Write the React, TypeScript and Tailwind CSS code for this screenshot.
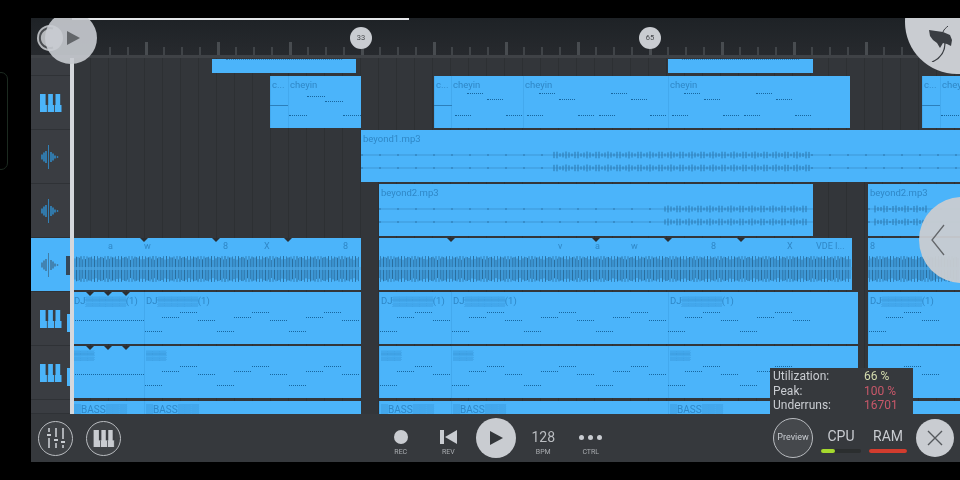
import React from "react";

const BLUE = "#4bb4fa";

type Note = [number, number, number];
type Section = { at: number; label?: string };
type ClipData = {
  x: number;
  w: number;
  label?: string;
  kind?: "midi" | "thin" | "wave" | "dj" | "bass" | "top";
  sections?: Section[];
  notes?: Note[];
  pins?: number[];
  words?: [number, string][];
  loud?: [number, number];
};

const Piano = ({ color, className }: { color: string; className?: string }) => (
  <svg viewBox="0 0 22 18" className={className}>
    <rect width="22" height="18" fill={color} />
    {[0, 1, 2].map((i) => (
      <rect key={i} x={7.3 * (i + 1) - 0.4} y="11" width="0.8" height="7" fill="#3a3d42" />
    ))}
    {[0, 1, 2].map((i) => (
      <rect key={i} x={5.6 + 7.3 * i} y="0" width="2.6" height="11" fill="#3a3d42" />
    ))}
  </svg>
);

const WaveIcon = ({ color }: { color: string }) => (
  <svg viewBox="0 0 20 24" className="h-[24px] w-[20px]">
    {[
      [2, 5],
      [4, 9],
      [6, 12],
      [8.5, 24],
      [11, 10],
      [13, 7],
      [15, 3],
      [17.5, 1.5],
    ].map(([x, h], i) => (
      <line key={i} x1={x} x2={x} y1={12 - h / 2} y2={12 + h / 2} stroke={color} strokeWidth={i === 3 ? 0.8 : 1.4} />
    ))}
  </svg>
);

// dashes of a midi pattern
const Notes = ({ notes }: { notes: Note[] }) => (
  <>
    {notes.map(([x, y, w], i) => (
      <div
        key={i}
        className="absolute h-[2px] border-b border-dotted border-[#17669f]"
        style={{ left: x, top: y, width: w }}
      />
    ))}
  </>
);

const ThinWave = ({ width, loud }: { width: number; loud: [number, number] }) => {
  const ticks = Array.from({ length: Math.floor(width / 3) }, (_, i) => i * 3 + 1);
  return (
    <svg width={width} height="34" className="absolute left-0 top-[15px]">
      {[10, 23].map((y) => (
        <g key={y}>
          <line x1="0" x2={width} y1={y} y2={y} stroke="#3f97d6" strokeWidth="1" />
          {ticks.map((t, i) => {
            const inside = t > loud[0] && t < loud[1];
            if (!inside && i % 6 !== 0) return null;
            const h = inside ? 1 + Math.abs(Math.sin(i * 0.9)) * 2.5 : 1;
            return <line key={t} x1={t} x2={t} y1={y - h} y2={y + h} stroke="#2a76ad" strokeWidth="1" />;
          })}
        </g>
      ))}
    </svg>
  );
};

const DenseWave = ({ width }: { width: number }) => {
  const bars = Array.from({ length: Math.floor(width / 1.5) }, (_, i) => i * 1.5);
  return (
    <svg width={width} height="28" className="absolute left-0 top-[17px]">
      {bars.map((x, i) => {
        const h = 9 + 4 * Math.abs(Math.sin(i * 1.37));
        return (
          <line
            key={i}
            x1={x}
            x2={x}
            y1={14 - h}
            y2={14 + h}
            stroke={i % 3 === 0 ? "#2a6f9f" : "#337fb6"}
            strokeWidth="1"
          />
        );
      })}
      <rect x="0" y="12" width={width} height="3" fill="#4aa3e0" opacity="0.75" />
    </svg>
  );
};

const chorus: Note[] = [
  [16, 16, 16],
  [36, 22, 16],
  [4, 38, 16],
  [55, 38, 16],
];

const djNotes = (count: number, offset: number): Note[] => {
  const out: Note[] = [];
  for (let i = 0; i < count; i++) {
    const x = offset + i * 72;
    out.push([x, 38, 17], [x + 17, 24, 17], [x + 35, 19, 17], [x + 53, 27, 17]);
  }
  return out;
};

const rows: { h: number; icon?: "piano" | "wave"; active?: boolean; chip?: boolean; clips: ClipData[] }[] = [
  {
    h: 18,
    clips: [
      { x: 140, w: 144, kind: "top" },
      { x: 596, w: 145, kind: "top" },
    ],
  },
  {
    h: 54,
    icon: "piano",
    clips: [
      { x: 198, w: 91, kind: "midi", sections: [{ at: 0, label: "c..." }, { at: 18, label: "cheyin" }], notes: [[37, 19, 18], [55, 24, 18], [19, 38, 18], [73, 38, 18]] },
      {
        x: 362,
        w: 416,
        kind: "midi",
        sections: [
          { at: 0, label: "c..." },
          { at: 17, label: "cheyin" },
          { at: 89, label: "cheyin" },
          { at: 234, label: "cheyin" },
        ],
        notes: [
          ...chorus.map(([x, y, w]): Note => [x + 17, y, w]),
          ...chorus.map(([x, y, w]): Note => [x + 89, y, w]),
          ...chorus.map(([x, y, w]): Note => [x + 161, y, w]),
          ...chorus.map(([x, y, w]): Note => [x + 234, y, w]),
          ...chorus.map(([x, y, w]): Note => [x + 306, y, w]),
        ],
      },
      { x: 850, w: 40, kind: "midi", sections: [{ at: 0, label: "c..." }, { at: 18, label: "chey" }], notes: [[19, 38, 18]] },
    ],
  },
  { h: 54, icon: "wave", clips: [{ x: 289, w: 600, label: "beyond1.mp3", kind: "thin", loud: [190, 450] }] },
  {
    h: 54,
    icon: "wave",
    clips: [
      { x: 307, w: 434, label: "beyond2.mp3", kind: "thin", loud: [285, 430] },
      { x: 796, w: 92, label: "beyond2.mp3", kind: "thin", loud: [5, 60] },
    ],
  },
  {
    h: 54,
    icon: "wave",
    active: true,
    clips: [
      { x: 0, w: 289, kind: "wave", pins: [72, 144, 216], words: [[36, "a"], [72, "w"], [151, "8"], [192, "X"], [271, "8"]] },
      { x: 307, w: 473, kind: "wave", pins: [72, 217, 289, 362], words: [[179, "v"], [216, "a"], [252, "w"], [332, "8"], [408, "X"], [437, "VDE I..."]] },
      { x: 796, w: 92, kind: "wave", words: [[2, "8"]] },
    ],
  },
  {
    h: 54,
    icon: "piano",
    chip: true,
    clips: [
      { x: 0, w: 289, kind: "dj", sections: [{ at: 0, label: "DJ▒▒▒▒▒▒(1)" }, { at: 72, label: "DJ▒▒▒▒▒▒(1)" }], pins: [18, 36, 54], notes: [[1, 27, 71], ...djNotes(3, 73)] },
      { x: 307, w: 479, kind: "dj", sections: [{ at: 0, label: "DJ▒▒▒▒▒▒(1)" }, { at: 72, label: "DJ▒▒▒▒▒▒(1)" }, { at: 289, label: "DJ▒▒▒▒▒▒(1)" }], notes: djNotes(6, 1) },
      { x: 796, w: 92, kind: "dj", sections: [{ at: 0, label: "DJ▒▒▒▒▒▒(1)" }], notes: djNotes(1, 1) },
    ],
  },
  {
    h: 54,
    icon: "piano",
    chip: true,
    clips: [
      { x: 0, w: 289, kind: "dj", sections: [{ at: 0, label: "▒▒▒" }, { at: 72, label: "▒▒▒" }], pins: [18, 36, 54], notes: [[1, 27, 71], ...djNotes(3, 73)] },
      { x: 307, w: 479, kind: "dj", sections: [{ at: 0, label: "▒▒▒" }, { at: 72, label: "▒▒▒" }, { at: 289, label: "▒▒▒" }], notes: djNotes(6, 1) },
      { x: 796, w: 92, kind: "dj", notes: djNotes(1, 1) },
    ],
  },
  {
    h: 14,
    clips: [
      { x: 0, w: 289, kind: "bass", sections: [{ at: 0, label: "▒BASS▒▒▒" }, { at: 72, label: "▒BASS▒▒▒" }] },
      { x: 307, w: 479, kind: "bass", sections: [{ at: 0, label: "▒BASS▒▒▒" }, { at: 72, label: "▒BASS▒▒▒" }, { at: 289, label: "▒BASS▒▒▒" }] },
      { x: 796, w: 92, kind: "bass" },
    ],
  },
];

const Clip = ({ clip, rowH }: { clip: ClipData; rowH: number }) => {
  const top = clip.kind === "top" ? 1 : clip.kind === "bass" ? 1 : 0;
  const height = clip.kind === "top" ? 14 : clip.kind === "bass" ? rowH - 1 : rowH - 2;
  return (
    <div className="absolute bg-[#4bb4fa]" style={{ left: clip.x, width: clip.w, top, height }}>
      <div className="absolute inset-0 overflow-hidden">
        {clip.kind === "top" && (
          <div className="absolute left-[14px] right-[14px] top-0 h-[2px] border-t border-dotted border-[#2c7fbb]" />
        )}
        {clip.label && (
          <span className="absolute left-[2px] top-[2px] text-[9.5px] leading-[14px] text-[#2f87c6]">{clip.label}</span>
        )}
        {clip.kind === "thin" && <ThinWave width={clip.w} loud={clip.loud ?? [0, 0]} />}
        {clip.kind === "wave" && <DenseWave width={clip.w} />}
        {clip.words?.map(([x, word]) => (
          <span key={x} className="absolute top-[2px] text-[9px] leading-[12px] text-[#2f87c6]" style={{ left: x }}>
            {word}
          </span>
        ))}
        {clip.sections?.map((s) => (
          <div key={s.at} className="absolute bottom-0 top-0 border-l border-[#43a9ee]" style={{ left: s.at }}>
            <span
              className={`ml-[1px] block whitespace-nowrap text-[#2f87c6] ${
                clip.kind === "bass" ? "mt-[3px] text-[10px] leading-[11px]" : "mt-[2px] text-[9.5px] leading-[14px]"
              }`}
            >
              {s.label}
            </span>
          </div>
        ))}
        {clip.notes && <Notes notes={clip.notes} />}
        {clip.kind === "midi" && <div className="absolute left-0 top-[29px] h-[1px] w-[18px] bg-[#2c7fbb]" />}
      </div>
      {clip.pins?.map((p) => (
        <div
          key={p}
          className="absolute top-0 h-0 w-0 border-x-[4px] border-t-[4px] border-x-transparent border-t-[#2b2e32]"
          style={{ left: p - 4 }}
        />
      ))}
    </div>
  );
};

const Ruler = () => (
  <div className="relative h-[37px] bg-gradient-to-b from-[#1e2226] to-[#272a2e]">
    <div className="absolute bottom-0 left-[78px] flex items-end">
      {Array.from({ length: 48 }, (_, i) => (
        <div key={i} className="flex w-[18px] justify-start">
          <div
            className={i % 4 === 2 ? "h-[13px] w-[3px] bg-[#484c50]" : "h-[8px] w-[2px] bg-[#404448]"}
          />
        </div>
      ))}
    </div>
    {[
      [319, "33"],
      [608, "65"],
    ].map(([left, n]) => (
      <div
        key={n}
        className="absolute top-[9px] flex h-[22px] w-[22px] items-center justify-center rounded-full bg-[#c9ccd1] text-[7.5px] text-[#44474b]"
        style={{ left: left as number }}
      >
        {n}
      </div>
    ))}
  </div>
);

const TrackRow = ({ row }: { row: (typeof rows)[number] }) => (
  <div className="flex" style={{ height: row.h }}>
    <div
      className={`relative flex w-[41px] shrink-0 items-center justify-start border-b border-[#2f3236] pl-[9px] ${row.active ? "bg-[#4bb4fa]" : "bg-[#3a3d42]"}`}
    >
      {row.icon === "piano" && <Piano color={BLUE} className="h-[18px] w-[22px]" />}
      {row.icon === "wave" && <WaveIcon color={row.active ? "#3f6f92" : "#2f93d6"} />}
      {row.active && <div className="absolute left-[35px] top-[18px] h-[19px] w-[4px] bg-[#34485a]" />}
      {row.chip && <div className="absolute left-[36px] top-[22px] h-[18px] w-[3px] bg-[#4bb4fa]" />}
    </div>
    <div className="relative flex-1 bg-[#33363a] bg-[repeating-linear-gradient(90deg,#2d3033_0_1px,transparent_1px_18px)]">
      {row.clips.map((c) => (
        <Clip key={c.x} clip={c} rowH={row.h} />
      ))}
    </div>
  </div>
);

const RoundIcon = ({ children }: { children: React.ReactNode }) => (
  <div className="flex h-[35px] w-[35px] items-center justify-center rounded-full border border-[#b9bcc0] bg-[#3f4246]">
    {children}
  </div>
);

const Transport = ({ label, children }: { label: string; children: React.ReactNode }) => (
  <div className="flex w-[47.5px] flex-col items-center pt-[8px]">
    <div className="flex h-[20px] items-center">{children}</div>
    <span className="text-[7px] leading-[10px] text-[#a9acb0]">{label}</span>
  </div>
);

const Meter = ({ label, color, fill, track }: { label: string; color: string; fill: string; track: string }) => (
  <div className="flex w-[40px] flex-col items-center pt-[3px]">
    <span className="text-[14px] leading-[20px] text-[#c9ccd1]">{label}</span>
    <div className={`mt-[3px] h-[4px] rounded-sm bg-[#2b2e2f] ${track}`}>
      <div className="h-full rounded-sm" style={{ width: fill, background: color }} />
    </div>
  </div>
);

export default function App() {
  return (
    <div className="relative h-[480px] w-[960px] overflow-hidden bg-black py-[18px] pl-[31px] font-['Roboto',sans-serif]">
      <div className="absolute -left-[6px] top-[72px] h-[98px] w-[14px] rounded-lg border border-[#1c2a20]" />
      <div className="relative flex h-[444px] w-[929px] flex-col overflow-hidden bg-[#33363a] blur-[0.4px]">
        <Ruler />
        <div className="h-[3px] bg-[#3f4246]" />

        <div className="flex h-[356px] flex-col overflow-hidden">
          {rows.map((row, i) => (
            <TrackRow key={i} row={row} />
          ))}
        </div>

        <div className="flex h-[48px] items-center bg-[#36393d] pl-[7px] pr-[6px]">
          <div className="flex gap-[13px]">
            <RoundIcon>
              <svg viewBox="0 0 24 24" className="h-[24px] w-[24px]">
                {[
                  [5, 9],
                  [12, 14],
                  [19, 16],
                ].map(([x, k]) => (
                  <g key={x} stroke="#c9ccd1">
                    <line x1={x} x2={x} y1="2" y2={k - 3} strokeWidth="1.6" />
                    <line x1={x} x2={x} y1={k + 3} y2="22" strokeWidth="1.6" />
                    <line x1={x - 2} x2={x + 2} y1={k} y2={k} strokeWidth="2" />
                  </g>
                ))}
              </svg>
            </RoundIcon>
            <RoundIcon>
              <Piano color="#c9ccd1" className="h-[17px] w-[22px]" />
            </RoundIcon>
          </div>

          <div className="ml-[256px] flex items-center">
            <Transport label="REC">
              <div className="h-[14px] w-[14px] rounded-full bg-[#c9ccd1]" />
            </Transport>
            <Transport label="REV">
              <svg viewBox="0 0 17 14" className="h-[14px] w-[17px]">
                <rect width="4" height="14" fill="#c9ccd1" />
                <path d="M5 7 17 0v14z" fill="#c9ccd1" />
              </svg>
            </Transport>
            <div className="flex w-[47.5px] justify-center">
              <div className="flex h-[40px] w-[40px] items-center justify-center rounded-full bg-[#c9ccd1] pl-[2px]">
                <svg viewBox="0 0 13 14" className="h-[14px] w-[13px]">
                  <path d="M0 0 13 7 0 14z" fill="#33363a" />
                </svg>
              </div>
            </div>
            <Transport label="BPM">
              <span className="text-[14px] leading-[20px] text-[#b9bcc0]">128</span>
            </Transport>
            <Transport label="CTRL">
              <div className="flex gap-[4px]">
                <div className="h-[5px] w-[5px] rounded-full bg-[#c9ccd1]" />
                <div className="h-[5px] w-[5px] rounded-full bg-[#c9ccd1]" />
                <div className="h-[5px] w-[5px] rounded-full bg-[#c9ccd1]" />
              </div>
            </Transport>
          </div>

          <div className="ml-auto flex items-center">
            <div className="flex h-[40px] w-[40px] items-center justify-center rounded-full border border-[#b9bcc0] bg-[#45484c] text-[9px] text-[#c9ccd1]">
              Preview
            </div>
            <div className="ml-[8px]">
              <Meter label="CPU" color="#a5d92e" fill="35%" track="w-[40px]" />
            </div>
            <div className="ml-[7px]">
              <Meter label="RAM" color="#d23c2e" fill="100%" track="w-[38px]" />
            </div>
            <div className="ml-[8px] flex h-[38px] w-[38px] items-center justify-center rounded-full bg-[#c9ccd1]">
              <svg viewBox="0 0 16 16" className="h-[16px] w-[16px]">
                <path d="M1 1 15 15M15 1 1 15" stroke="#55585c" strokeWidth="1.4" />
              </svg>
            </div>
          </div>
        </div>

        {/* things floating over the playlist */}
        <div className="absolute bottom-[48px] left-[39px] top-[40px] w-[4px] bg-[#d5d8dc]" />
        <div className="absolute left-[41px] top-0 h-[2px] w-[337px] bg-[#e5e7ea]" />

        <div className="absolute left-[6px] top-[7px] h-[26px] w-[26px] rounded-full bg-[#b5b8bc]">
          <svg viewBox="0 0 26 26" className="h-[26px] w-[26px]">
            <path d="M16 3.5a10 10 0 1 0 0 19" fill="none" stroke="#4a4d51" strokeWidth="2" />
          </svg>
        </div>
        <div className="absolute -top-[6px] left-[14px] flex h-[52px] w-[52px] items-center justify-center rounded-full bg-[#c9ccd1]/90 pl-[4px]">
          <svg viewBox="0 0 13 14" className="h-[14px] w-[13px]">
            <path d="M0 0 13 7 0 14z" fill="#63666a" />
          </svg>
        </div>

        <div className="absolute -top-[48px] left-[874px] h-[104px] w-[104px] rounded-full bg-[#c9ccd1]">
          <svg viewBox="0 0 24 36" className="absolute left-[23px] top-[56px] h-[36px] w-[24px]">
            <path d="M1 4 8 5l7 1 7 3 2 5-1 6-4-2-4-1-3 5-3-5-4-3-3-4z" fill="#3a3d42" />
            <path d="M17 17c0 8-4 15-13 19" fill="none" stroke="#3a3d42" strokeWidth="1.3" />
            <path d="M15 6c1-3 3-4 5-6" fill="none" stroke="#3a3d42" strokeWidth="1" />
          </svg>
        </div>

        <div className="absolute left-[888px] top-[179px] flex h-[86px] w-[86px] items-center rounded-full bg-[#c9ccd1]/95 pl-[12px]">
          <svg viewBox="0 0 14 32" className="h-[32px] w-[14px]">
            <path d="M13 1 1 16l12 15" fill="none" stroke="#63666a" strokeWidth="1.3" />
          </svg>
        </div>

        <div className="absolute bottom-[48px] left-[739px] h-[46px] w-[143px] bg-[#36393d] px-[3px] pt-[1px] text-[12px] leading-[14.5px]">
          {[
            ["Utilization:", "66 %", "text-[#d4dcae]"],
            ["Peak:", "100 %", "text-[#c8586a]"],
            ["Underruns:", "16701", "text-[#c8586a]"],
          ].map(([k, v, c]) => (
            <div key={k} className="flex">
              <span className="w-[91px] text-[#c9ccd1]">{k}</span>
              <span className={c}>{v}</span>
            </div>
          ))}
        </div>
      </div>
    </div>
  );
}
